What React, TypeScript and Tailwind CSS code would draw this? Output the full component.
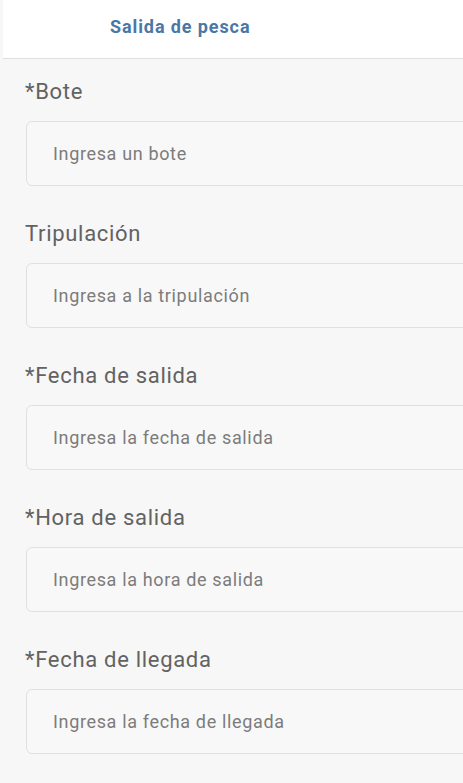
import React from 'react';

const fields = [
  { label: '*Bote', placeholder: 'Ingresa un bote' },
  { label: 'Tripulación', placeholder: 'Ingresa a la tripulación' },
  { label: '*Fecha de salida', placeholder: 'Ingresa la fecha de salida' },
  { label: '*Hora de salida', placeholder: 'Ingresa la hora de salida' },
  { label: '*Fecha de llegada', placeholder: 'Ingresa la fecha de llegada' },
];

export default function App() {
  return (
    <div className="w-[463px] h-[783px] overflow-hidden bg-[#f7f7f7] font-['Roboto',sans-serif]">
      <header className="h-[59px] bg-white border-b border-[#dedede] ml-[3px] -mb-px flex items-center">
        <div className="pl-[107px] pb-[5px] text-[18px] font-bold text-[#4b77a6] tracking-[0.9px]">Salida de pesca</div>
      </header>
      <div className="pl-[26px] pt-[19px] flex flex-col">
        {fields.map((f) => (
          <div key={f.label} className="flex flex-col h-[142px]">
            <label className="h-[29px] leading-[29px] text-[22px] text-[#626262] tracking-[0.7px] -ml-[1px]">{f.label}</label>
            <div className="mt-[15px] h-[65px] w-[460px] shrink-0 rounded-[6px] border border-[#e0e0e0] bg-[#f8f8f8] flex items-center pl-[26px] text-[18px] text-[#7c7c7c] tracking-[0.65px]">
              {f.placeholder}
            </div>
          </div>
        ))}
      </div>
    </div>
  );
}
